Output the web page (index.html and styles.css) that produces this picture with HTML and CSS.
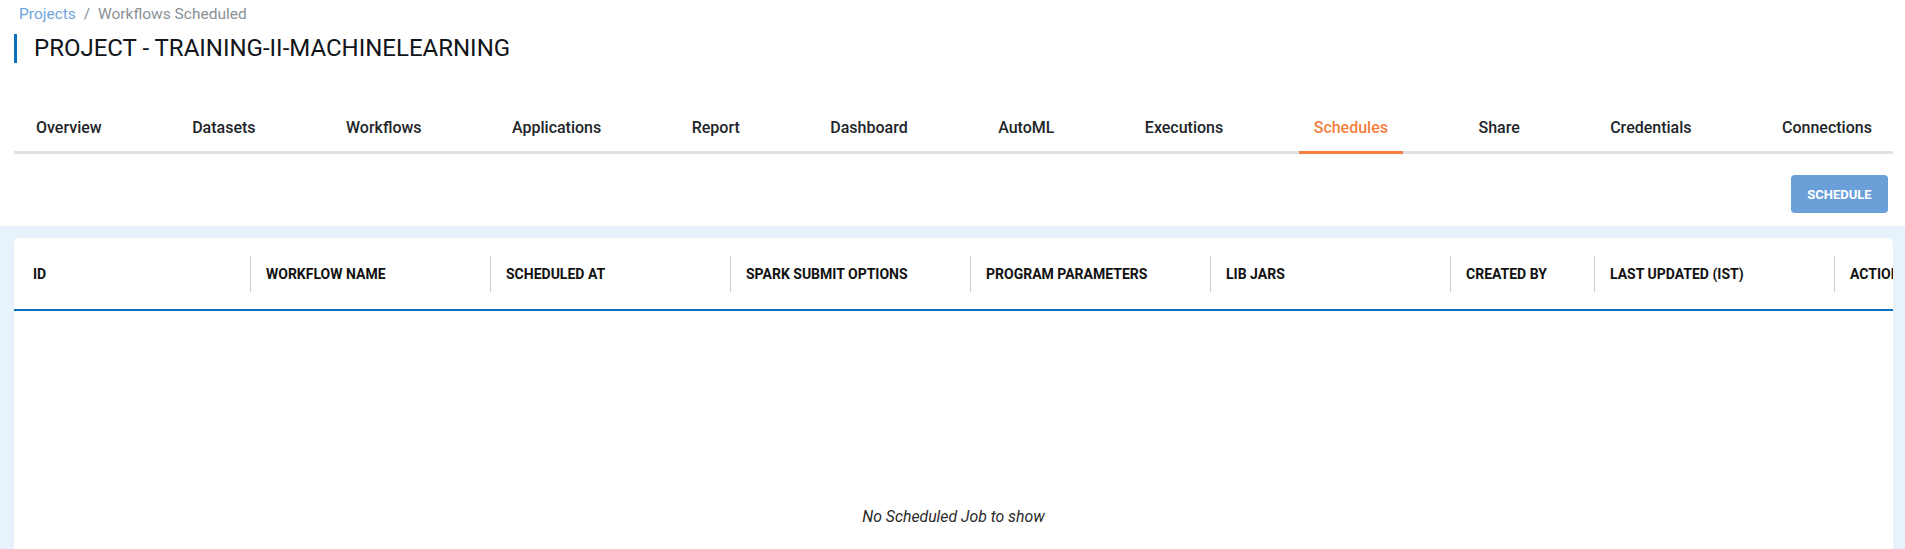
FILE: index.html
```html
<!DOCTYPE html>
<html lang="en">
<head>
<meta charset="utf-8">
<title>Workflows Scheduled</title>
<link rel="stylesheet" href="styles.css">
</head>
<body>
<div class="top">
  <nav class="crumbs">
    <a class="crumb-link" href="#">Projects</a>
    <span class="crumb-sep">/</span>
    <span class="crumb-current">Workflows Scheduled</span>
  </nav>
  <h1 class="title">PROJECT - TRAINING-II-MACHINELEARNING</h1>
  <div class="tabs">
    <a class="tab" href="#">Overview</a>
    <a class="tab" href="#">Datasets</a>
    <a class="tab" href="#">Workflows</a>
    <a class="tab" href="#">Applications</a>
    <a class="tab" href="#">Report</a>
    <a class="tab" href="#">Dashboard</a>
    <a class="tab" href="#">AutoML</a>
    <a class="tab" href="#">Executions</a>
    <a class="tab active" href="#">Schedules</a>
    <a class="tab" href="#">Share</a>
    <a class="tab" href="#">Credentials</a>
    <a class="tab" href="#">Connections</a>
  </div>
  <div class="toolbar">
    <button class="btn-schedule" type="button">SCHEDULE</button>
  </div>
</div>
<main class="content">
  <section class="card">
    <div class="thead">
      <div class="th first">ID</div>
      <div class="th">WORKFLOW NAME</div>
      <div class="th">SCHEDULED AT</div>
      <div class="th">SPARK SUBMIT OPTIONS</div>
      <div class="th">PROGRAM PARAMETERS</div>
      <div class="th">LIB JARS</div>
      <div class="th">CREATED BY</div>
      <div class="th">LAST UPDATED (IST)</div>
      <div class="th">ACTIONS</div>
    </div>
    <div class="empty">No Scheduled Job to show</div>
  </section>
</main>
</body>
</html>
```

FILE: styles.css
```css
* { box-sizing: border-box; }

html, body {
  margin: 0;
  padding: 0;
  background: #ffffff;
  font-family: Roboto, "Liberation Sans", Arial, sans-serif;
  color: #212529;
  overflow: hidden;
}

.top {
  padding: 3px 12px 13px 14px;
}

.crumbs {
  font-size: 15.5px;
  line-height: 22px;
  padding-left: 5px;
}

.crumb-link {
  color: #6ea6de;
  text-decoration: none;
}

.crumb-sep {
  color: #8a9096;
  margin: 0 4px;
}

.crumb-current {
  color: #8a9096;
}

.title {
  margin: 9px 0 0 0;
  border-left: 3px solid #0a72bc;
  padding-left: 17px;
  font-size: 24px;
  line-height: 29px;
  font-weight: 400;
  color: #111418;
}

.tabs {
  margin-top: 41px;
  display: flex;
  justify-content: space-between;
  padding: 0 6px 0 7px;
  border-bottom: 3px solid #dee2e6;
}

.tab {
  display: block;
  padding: 14px 15px 14px;
  margin-bottom: -3px;
  border-bottom: 3px solid transparent;
  font-size: 16px;
  line-height: 19px;
  font-weight: 500;
  color: #212529;
  text-decoration: none;
}

.tab.active {
  color: #f57f40;
  border-bottom-color: #f57f40;
}

.toolbar {
  display: flex;
  justify-content: flex-end;
  margin-top: 21px;
  padding-right: 5px;
}

.btn-schedule {
  width: 97px;
  height: 38px;
  border: none;
  border-radius: 4px;
  background: #6a9fd8;
  color: #ffffff;
  font-family: Roboto, "Liberation Sans", Arial, sans-serif;
  font-size: 13px;
  font-weight: 700;
  padding: 0;
}

.content {
  background: #e8f2fd;
  padding: 12px 12px 0 14px;
  min-height: 400px;
}

.card {
  background: #ffffff;
  border-radius: 6px 6px 0 0;
  overflow: hidden;
}

.thead {
  display: grid;
  grid-template-columns: 236px 240px 240px 240px 240px 240px 144px 240px 240px;
  border-bottom: 2px solid #0a72bc;
  width: max-content;
  min-width: 100%;
}

.th {
  height: 71px;
  display: flex;
  align-items: center;
  padding: 0 16px;
  font-size: 14px;
  font-weight: 700;
  color: #111111;
  white-space: nowrap;
  background: linear-gradient(#cfcfcf, #cfcfcf) left center / 1px 36px no-repeat;
}

.th.first {
  padding-left: 19px;
  background: none;
}

.empty {
  padding: 196px 0 200px;
  text-align: center;
  font-size: 15.8px;
  line-height: 19px;
  font-style: italic;
  color: #2a2a2a;
}
```
